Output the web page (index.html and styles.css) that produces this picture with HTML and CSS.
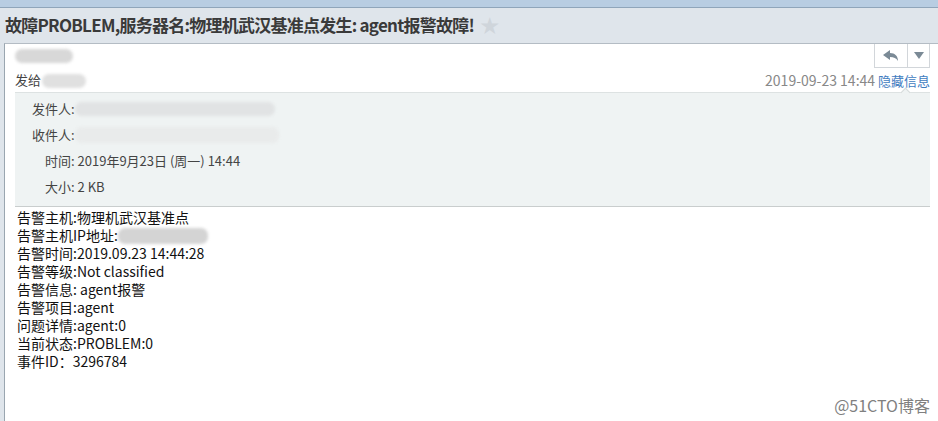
FILE: index.html
```html
<!DOCTYPE html>
<html lang="zh-CN">
<head>
    <meta charset="UTF-8">
    <title>故障PROBLEM</title>
    <link rel="stylesheet" href="styles.css">
</head>
<body>
    <div class="topband"></div>
    <div class="subject">
        <h1>故障PROBLEM,服务器名:物理机武汉基准点发生: agent报警故障!</h1>
        <span class="star">&#9733;</span>
    </div>

    <div class="mail">
        <div class="head">
            <div class="who">
                <div class="blur sender"></div>
                <div class="to">发给 <span class="blur recip"></span></div>
            </div>
            <div class="side">
                <div class="tools">
                    <span class="btn reply">
                        <svg width="16" height="12" viewBox="0 0 16 12"><path d="M0 5 L7 0 L7 3 C12 3 15 6 15 11 C13 8 11 7 7 7 L7 10 Z" fill="#7b8a96"/></svg>
                    </span>
                    <span class="btn more">
                        <svg width="10" height="7" viewBox="0 0 10 7"><path d="M0 0 L10 0 L5 7 Z" fill="#7b8a96"/></svg>
                    </span>
                </div>
                <div class="meta"><span class="date">2019-09-23 14:44</span> <a class="hide">隐藏信息</a></div>
            </div>
        </div>

        <div class="info">
            <div class="row">发件人:<span class="blur from"></span></div>
            <div class="row">收件人:<span class="blur rcpt"></span></div>
            <div class="row short">时间: 2019年9月23日 (周一) 14:44</div>
            <div class="row short">大小: 2 KB</div>
        </div>

        <div class="body">
            <div>告警主机:物理机武汉基准点</div>
            <div>告警主机IP地址:<span class="blur ip"></span></div>
            <div>告警时间:2019.09.23 14:44:28</div>
            <div>告警等级:Not classified</div>
            <div>告警信息: agent报警</div>
            <div>告警项目:agent</div>
            <div>问题详情:agent:0</div>
            <div>当前状态:PROBLEM:0</div>
            <div>事件ID：3296784</div>
        </div>

        <div class="mark">@51CTO博客</div>
    </div>
</body>
</html>
```

FILE: styles.css
```css
body {
    margin: 0;
    width: 938px;
    height: 421px;
    overflow: hidden;
    background-color: #dfe5eb;
    font-family: "Noto Sans CJK SC", "Noto Sans", sans-serif;
    color: #333;
}

.topband {
    height: 7px;
    background-color: #b8cde2;
    border-bottom: 1px solid #8fa5ba;
}

.subject {
    display: flex;
    align-items: center;
    height: 33px;
    padding-left: 5px;
    padding-bottom: 2px;
}

.subject h1 {
    margin: 0;
    font-size: 17px;
    font-weight: bold;
    color: #3a3a3a;
    letter-spacing: -0.75px;
}

.star {
    margin-left: 6px;
    font-size: 19px;
    color: #cfd5db;
}

.mail {
    margin-left: 4px;
    height: 378px;
    background-color: #fff;
    border-top: 1px solid #b4bcc4;
    border-left: 1px solid #9aa6b0;
    position: relative;
}

.head {
    display: flex;
    justify-content: space-between;
    height: 48px;
}

.who {
    padding: 5px 0 0 10px;
    font-size: 13px;
}

.blur {
    display: inline-block;
    background-color: #d8d8d8;
    border-radius: 7px;
    filter: blur(1.5px);
    vertical-align: middle;
}

.sender {
    width: 58px;
    height: 14px;
    display: block;
}

.to {
    margin-top: 7px;
    color: #444;
}

.recip {
    width: 44px;
    height: 14px;
    margin-left: -2px;
    background-color: #e0e0e0;
}

.side {
    display: flex;
    flex-direction: column;
    align-items: flex-end;
    padding-right: 8px;
}

.tools {
    display: flex;
    height: 23px;
    border: 1px solid #d2d6da;
    border-top: none;
}

.btn {
    display: flex;
    align-items: center;
    justify-content: center;
    height: 23px;
}

.reply {
    width: 32px;
    border-right: 1px solid #d2d6da;
}

.more {
    width: 21px;
}

.meta {
    margin-top: 2px;
    font-size: 13px;
}

.date {
    font-size: 14px;
    color: #888;
}

.hide {
    color: #3f7cbf;
}

.info {
    position: relative;
    margin: 0 8px 0 10px;
    height: 109px;
    padding-top: 4px;
    background-color: #eff3f3;
    border-top: 1px solid #dde2e2;
    border-bottom: 1px solid #c9cdcd;
    font-size: 13px;
    color: #444;
}

.info::before {
    content: "";
    position: absolute;
    top: -4px;
    right: 21px;
    width: 6px;
    height: 6px;
    background-color: #eff3f3;
    border-top: 1px solid #d6dbdb;
    border-left: 1px solid #d6dbdb;
    transform: rotate(45deg);
}

.row {
    height: 23px;
    display: flex;
    align-items: center;
    padding-left: 17px;
    margin-bottom: 3px;
}

.row.short {
    padding-left: 30px;
}

.from {
    width: 200px;
    height: 14px;
    background-color: #e1e3e4;
}

.rcpt {
    width: 204px;
    height: 16px;
    background-color: #e9ebeb;
}

.body {
    padding: 1px 0 0 12px;
    font-size: 14px;
    line-height: 18px;
    color: #111;
}

.body .blur {
    vertical-align: -3px;
}

.ip {
    width: 90px;
    height: 16px;
    background-color: #d4d4d4;
}

.mark {
    position: absolute;
    right: 8px;
    bottom: 5px;
    font-size: 16px;
    color: #808080;
}
```
